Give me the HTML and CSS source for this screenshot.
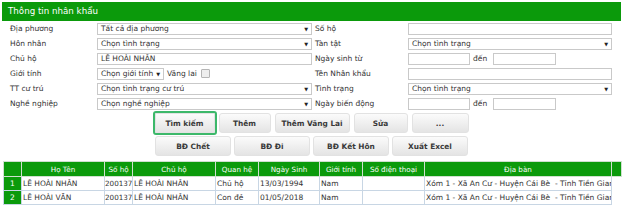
FILE: index.html
```html
<!DOCTYPE html>
<html lang="vi">
<head>
<meta charset="utf-8">
<title>Thông tin nhân khẩu</title>
<link rel="stylesheet" href="styles.css">
</head>
<body>
<div class="panel">
  <div class="title">Thông tin nhân khẩu</div>
  <div class="form">
    <div class="label">Địa phương</div>
    <div class="select"><span>Tất cả địa phương</span><span class="arrow">▼</span></div>
    <div class="label r">Số hộ</div>
    <div class="input"></div>

    <div class="label">Hôn nhân</div>
    <div class="select"><span>Chọn tình trạng</span><span class="arrow">▼</span></div>
    <div class="label r">Tàn tật</div>
    <div class="select"><span>Chọn tình trạng</span><span class="arrow">▼</span></div>

    <div class="label">Chủ hộ</div>
    <div class="input">LÊ HOÀI NHÂN</div>
    <div class="label r">Ngày sinh từ</div>
    <div class="range"><div class="input date"></div><span class="den">đến</span><div class="input date2"></div></div>

    <div class="label">Giới tính</div>
    <div class="inline"><div class="select small"><span>Chọn giới tính</span><span class="arrow">▼</span></div><span class="vl">Vãng lai</span><span class="check"></span></div>
    <div class="label r">Tên Nhân khẩu</div>
    <div class="input"></div>

    <div class="label">TT cư trú</div>
    <div class="select"><span>Chọn tình trạng cư trú</span><span class="arrow">▼</span></div>
    <div class="label r">Tình trạng</div>
    <div class="select"><span>Chọn tình trạng</span><span class="arrow">▼</span></div>

    <div class="label">Nghề nghiệp</div>
    <div class="select"><span>Chọn nghề nghiệp</span><span class="arrow">▼</span></div>
    <div class="label r">Ngày biến động</div>
    <div class="range"><div class="input date"></div><span class="den">đến</span><div class="input date2"></div></div>
  </div>

  <div class="buttons">
    <div class="brow">
      <button class="btn focus w60">Tìm kiếm</button>
      <button class="btn w52">Thêm</button>
      <button class="btn w75">Thêm Vãng Lai</button>
      <button class="btn w54">Sửa</button>
      <button class="btn w57">...</button>
    </div>
    <div class="brow tight">
      <button class="btn w76">BĐ Chết</button>
      <button class="btn w76">BĐ Đi</button>
      <button class="btn w76">BĐ Kết Hôn</button>
      <button class="btn w76">Xuất Excel</button>
    </div>
  </div>

  <table class="grid">
    <colgroup>
      <col class="c0"><col class="c1"><col class="c2"><col class="c3"><col class="c4"><col class="c5"><col class="c6"><col class="c7"><col class="c8"><col class="c9">
    </colgroup>
    <thead>
      <tr><th></th><th>Họ Tên</th><th>Số hộ</th><th>Chủ hộ</th><th>Quan hệ</th><th>Ngày Sinh</th><th>Giới tính</th><th>Số điện thoại</th><th>Địa bàn</th><th class="stubh"></th></tr>
    </thead>
    <tbody>
      <tr><td class="idx">1</td><td>LÊ HOÀI NHÂN</td><td class="num">200137</td><td>LÊ HOÀI NHÂN</td><td>Chủ hộ</td><td>13/03/1994</td><td>Nam</td><td></td><td>Xóm 1 - Xã An Cư - Huyện Cái Bè&nbsp; - Tỉnh Tiền Giang</td><td class="stub"></td></tr>
      <tr><td class="idx">2</td><td>LÊ HOÀI VĂN</td><td class="num">200137</td><td>LÊ HOÀI NHÂN</td><td>Con đẻ</td><td>01/05/2018</td><td>Nam</td><td></td><td>Xóm 1 - Xã An Cư - Huyện Cái Bè&nbsp; - Tỉnh Tiền Giang</td><td class="stub"></td></tr>
    </tbody>
  </table>
</div>
</body>
</html>
```

FILE: styles.css
```css
html, body {
  margin: 0;
  padding: 0;
  background: #fff;
}
body {
  font-family: "DejaVu Sans", Verdana, sans-serif;
  font-size: 7.5px;
  color: #333;
}
.panel {
  padding: 2px 3px 0 2px;
}
.title {
  background: #0b9a0b;
  color: #fff;
  height: 19px;
  line-height: 19px;
  padding-left: 6px;
  font-size: 8.7px;
}
.form {
  display: grid;
  grid-template-columns: 87px 215px 96px 204px;
  grid-auto-rows: 15px;
  align-items: center;
  padding-left: 8px;
}
.label {
  white-space: nowrap;
}
.label.r {
  padding-left: 3px;
}
.input, .select {
  box-sizing: border-box;
  height: 12px;
  line-height: 10px;
  border: 1px solid #c9c9c9;
  background: #fff;
  padding-left: 3px;
  white-space: nowrap;
  overflow: hidden;
}
.select {
  display: flex;
  justify-content: space-between;
  align-items: center;
  padding-right: 3px;
}
.arrow {
  font-size: 5px;
  color: #222;
}
.select.small {
  width: 67px;
  flex: none;
}
.inline, .range {
  display: flex;
  align-items: center;
  height: 12px;
}
.vl {
  margin-left: 3px;
}
.check {
  width: 7px;
  height: 7px;
  border: 1px solid #b5b5b5;
  background: #eee;
  margin-left: 4px;
  border-radius: 1px;
}
.input.date {
  width: 62px;
}
.den {
  margin: 0 6px 0 3px;
}
.input.date2 {
  width: 63px;
}
.buttons {
  margin-top: 2px;
  display: flex;
  flex-direction: column;
  align-items: center;
  gap: 3px;
}
.brow {
  display: flex;
  gap: 4px;
}
.brow.tight {
  gap: 3px;
}
.btn {
  box-sizing: border-box;
  height: 20px;
  padding: 0;
  border: 1px solid #e2e2e2;
  border-radius: 3px;
  background: linear-gradient(#fbfbfb, #e4e4e4);
  font-family: "DejaVu Sans", Verdana, sans-serif;
  font-size: 7.4px;
  font-weight: bold;
  color: #3a3a3a;
}
.btn.focus {
  outline: 2px solid #3cb86a;
  border-radius: 1px;
}
.w60 { width: 60px; }
.w52 { width: 52px; }
.w75 { width: 75px; }
.w54 { width: 54px; }
.w57 { width: 57px; }
.w76 { width: 76px; }
.grid {
  margin-top: 5px;
  margin-left: 1px;
  width: 618px;
  table-layout: fixed;
  border-collapse: collapse;
  font-size: 7.5px;
}
.c0 { width: 18px; }
.c1 { width: 83px; }
.c2 { width: 28px; }
.c3 { width: 83px; }
.c4 { width: 43px; }
.c5 { width: 61px; }
.c6 { width: 43px; }
.c7 { width: 62px; }
.c8 { width: 187px; }
.c9 { width: 10px; }
.grid th {
  background: #0b9a0b;
  color: #fff;
  font-weight: normal;
  font-size: 7.2px;
  height: 14px;
  padding: 0;
  border: 1px solid #cfe0cf;
  text-align: center;
  white-space: nowrap;
  overflow: hidden;
}
.grid td {
  height: 13px;
  padding: 0 0 0 1px;
  border: 1px solid #c8d6e4;
  white-space: nowrap;
  overflow: hidden;
  color: #333;
}
.grid td.num {
  padding: 0;
  font-size: 7.2px;
}
.grid td.idx {
  background: #0b9a0b;
  color: #fff;
  text-align: center;
  padding: 0;
}
.grid td.stub {
  border: none;
  border-left: 1px solid #c8d6e4;
  background: #fff;
}
```
